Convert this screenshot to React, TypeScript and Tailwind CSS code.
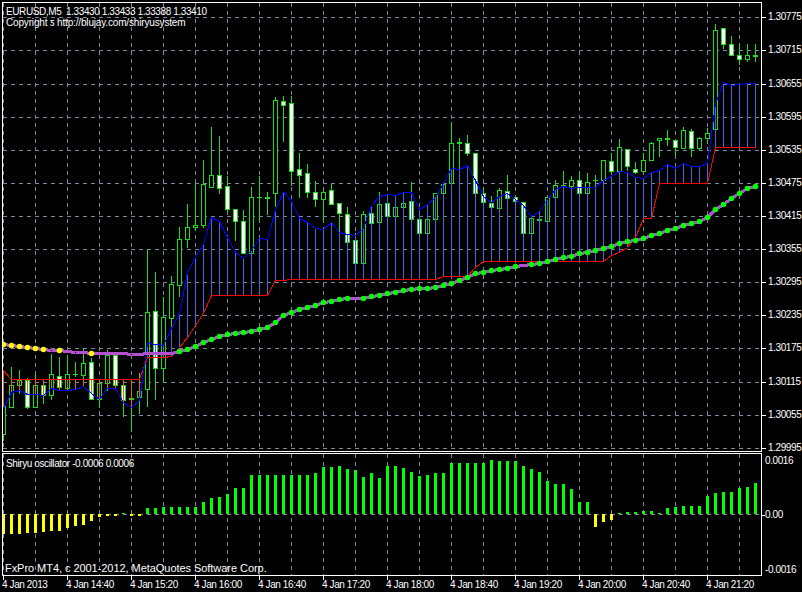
import React from 'react';

// bar i sits at pixel column 3 + 8 * i, everything below is in page pixels
const barX = (i: number) => 3 + 8 * i;

// high, body top, body bottom, low, white body?
const CANDLES: number[][] = [
  [405, 405, 434, 440, 0], [367, 385, 407, 407, 0], [370, 380, 385, 393, 0], [378, 380, 407, 408, 1], [374, 385, 407, 407, 0],
  [385, 385, 395, 403, 1], [354, 374, 395, 399, 0], [357, 376, 387, 387, 1], [356, 374, 388, 388, 0], [362, 374, 374, 376, 0],
  [348, 363, 375, 382, 0], [358, 362, 399, 399, 1], [382, 383, 399, 407, 0], [350, 355, 383, 390, 0], [355, 355, 385, 385, 1],
  [383, 385, 400, 416, 1], [380, 398, 399, 431, 0], [373, 391, 397, 413, 0], [249, 312, 389, 406, 0], [272, 311, 368, 399, 1],
  [297, 317, 368, 382, 0], [276, 284, 318, 330, 0], [227, 239, 285, 296, 0], [204, 227, 239, 247, 0], [183, 225, 227, 230, 0],
  [160, 184, 225, 227, 0], [127, 175, 187, 187, 0], [136, 175, 188, 193, 1], [176, 186, 209, 211, 1], [209, 209, 221, 240, 1],
  [210, 221, 253, 253, 1], [187, 197, 253, 253, 0], [176, 197, 197, 221, 0], [192, 197, 198, 214, 0], [97, 100, 193, 206, 0],
  [96, 101, 105, 141, 1], [96, 103, 171, 185, 1], [153, 169, 175, 197, 1], [164, 173, 192, 197, 1], [181, 192, 199, 206, 1],
  [188, 192, 199, 221, 0], [184, 190, 204, 204, 1], [203, 203, 213, 233, 1], [207, 214, 242, 242, 1], [233, 240, 263, 263, 1],
  [211, 214, 263, 263, 0], [208, 213, 223, 223, 1], [192, 204, 222, 222, 0], [203, 203, 216, 216, 1], [207, 207, 216, 216, 0],
  [203, 203, 207, 207, 0], [182, 201, 219, 219, 1], [219, 219, 233, 233, 1], [219, 219, 233, 233, 0], [193, 193, 219, 219, 0],
  [182, 184, 193, 193, 0], [122, 143, 183, 183, 0], [138, 142, 143, 170, 0], [135, 143, 153, 155, 1], [153, 153, 193, 193, 1],
  [187, 193, 202, 202, 1], [196, 203, 207, 207, 1], [188, 190, 208, 208, 0], [175, 191, 198, 198, 1], [197, 197, 201, 201, 1],
  [202, 202, 233, 233, 1], [218, 218, 233, 233, 0], [219, 219, 220, 220, 0], [197, 197, 221, 221, 0], [180, 185, 197, 197, 0],
  [171, 185, 185, 187, 0], [176, 180, 186, 190, 0], [172, 180, 193, 193, 1], [173, 182, 193, 193, 0], [175, 180, 180, 187, 0],
  [160, 160, 180, 180, 0], [153, 161, 171, 173, 1], [139, 147, 171, 171, 0], [149, 149, 166, 170, 1], [162, 169, 172, 173, 1],
  [153, 160, 171, 171, 0], [142, 143, 160, 160, 0], [138, 138, 140, 156, 0], [130, 138, 139, 145, 0], [140, 140, 147, 155, 1],
  [127, 130, 148, 148, 0], [129, 131, 148, 156, 1], [137, 138, 148, 149, 0], [128, 133, 138, 143, 0], [24, 30, 129, 129, 0],
  [28, 28, 44, 48, 1], [36, 44, 55, 55, 1], [44, 55, 59, 64, 1], [44, 55, 59, 61, 0], [44, 55, 56, 61, 0],
];

const BLUE = [
  408, 392, 390, 394, 394, 395, 388, 390, 390, 389,
  386, 393, 399, 388, 388, 402, 407, 400, 343, 344,
  345, 328, 313, 272, 257, 244, 217, 221, 237, 252,
  258, 250, 238, 239, 210, 191, 201, 218, 222, 228,
  229, 222, 232, 234, 235, 228, 205, 196, 194, 195,
  192, 192, 209, 204, 197, 183, 168, 169, 165, 180,
  196, 202, 196, 193, 199, 205, 216, 211, 199, 189,
  186, 188, 187, 187, 187, 180, 176, 171, 172, 177,
  178, 172, 170, 164, 168, 163, 166, 166, 163, 103,
  82, 85, 84, 83, 83,
];

const RED = [
  370, 379, 379, 379, 379, 379, 379, 379, 379, 379,
  379, 379, 379, 379, 379, 379, 379, 379, 357, 357,
  357, 356, 347, 337, 325, 313, 295, 295, 295, 295,
  295, 295, 295, 295, 280, 280, 279, 279, 279, 279,
  279, 279, 279, 279, 279, 279, 279, 279, 279, 279,
  279, 279, 279, 279, 279, 276, 276, 276, 276, 267,
  261, 261, 261, 261, 261, 261, 261, 261, 261, 261,
  261, 261, 261, 261, 261, 261, 255, 252, 247, 237,
  218, 218, 183, 183, 183, 183, 183, 183, 183, 147,
  147, 147, 147, 147, 147,
];

const MA = [
  344, 345, 346, 347, 348, 349, 350, 350, 351, 352,
  352, 353, 353, 353, 353, 353, 354, 354, 353, 353,
  353, 353, 351, 349, 346, 342, 339, 336, 334, 333,
  332, 331, 329, 327, 322, 315, 312, 309, 307, 305,
  302, 301, 299, 298, 298, 298, 296, 295, 293, 292,
  290, 289, 288, 288, 287, 285, 283, 280, 277, 273,
  272, 270, 269, 268, 266, 265, 264, 263, 261, 259,
  257, 256, 253, 252, 250, 248, 246, 243, 241, 240,
  238, 235, 233, 230, 228, 225, 223, 221, 217, 209,
  204, 198, 193, 188, 186,
];

const YELLOW_DOTS = [0, 1, 2, 3, 4, 5, 7, 11];
const GREEN_DOTS = MA.map((_, i) => i).filter((i) => i >= 22 && i !== 44 && i !== 65);

// oscillator, pixels above (+) or below (-) the zero line
const OSC = [
  -20, -20, -20, -19, -19, -18, -17, -17, -14, -12,
  -11, -7, -3, -2, -2, 1, -2, -2, 6, 6,
  7, 7, 7, 7, 7, 12, 16, 17, 20, 26,
  26, 39, 39, 39, 39, 39, 39, 39, 39, 41,
  47, 47, 48, 45, 44, 37, 41, 36, 48, 48,
  46, 42, 38, 39, 41, 41, 51, 51, 51, 51,
  51, 54, 53, 53, 53, 48, 45, 42, 33, 30,
  30, 25, 12, 12, -13, -8, -6, 1, 2, 2,
  3, 3, 1, 6, 7, 8, 8, 8, 18, 21,
  22, 22, 26, 27, 31,
];

const GRID_X = Array.from({ length: 24 }, (_, i) => 3 + 32 * i);
const GRID_Y = [17, 50, 84, 117, 150, 183, 216, 249, 282, 315, 348, 382, 415, 448];
const PRICES = ['1.30775', '1.30715', '1.30655', '1.30595', '1.30535', '1.30475', '1.30415', '1.30355', '1.30295', '1.30235', '1.30175', '1.30115', '1.30055', '1.29995'];
const TIMES = ['4 Jan 2013', '4 Jan 14:40', '4 Jan 15:20', '4 Jan 16:00', '4 Jan 16:40', '4 Jan 17:20', '4 Jan 18:00', '4 Jan 18:40', '4 Jan 19:20', '4 Jan 20:00', '4 Jan 20:40', '4 Jan 21:20'];
const ZERO_Y = 514;

const points = (ys: number[]) => ys.map((y, i) => `${barX(i) + 0.5},${y + 0.5}`).join(' ');

function VerticalGrid({ y1, y2 }: { y1: number; y2: number }) {
  return (
    <>
      {GRID_X.map((x) => (
        <line key={x} x1={x + 0.5} x2={x + 0.5} y1={y1} y2={y2} className="stroke-[#778899]" strokeDasharray="4 4" />
      ))}
    </>
  );
}

function PriceChart() {
  return (
    <svg viewBox="3 3 758 448" width={758} height={448} className="block" shapeRendering="crispEdges">
      <VerticalGrid y1={3} y2={451} />
      {GRID_Y.map((y) => (
        <line key={y} x1={3} x2={761} y1={y + 0.5} y2={y + 0.5} className="stroke-[#778899]" strokeDasharray="4 4" />
      ))}

      {CANDLES.map(([high, top, bottom, low, white], i) => {
        const x = barX(i);
        const h = bottom - top + 1;
        return (
          <g key={i}>
            <rect x={x} y={high} width={1} height={low - high + 1} className="fill-[#1fdc1f]" />
            <rect x={x - 2} y={top} width={5} height={h} className="fill-[#1fdc1f]" />
            {h > 2 && <rect x={x - 1} y={top + 1} width={3} height={h - 2} className={white ? 'fill-white' : 'fill-black'} />}
          </g>
        );
      })}

      {BLUE.map((y, i) => (
        <rect
          key={i}
          x={barX(i)}
          y={Math.min(y, RED[i])}
          width={1}
          height={Math.abs(y - RED[i])}
          className={y < RED[i] ? 'fill-[#4169e1]' : 'fill-[#e8601c]'}
        />
      ))}

      <polyline points={points(RED)} fill="none" strokeWidth={1} className="stroke-[#ff0000]" />
      <polyline points={points(BLUE)} fill="none" strokeWidth={1} className="stroke-[#0000ff]" />
      <polyline points={points(MA)} fill="none" strokeWidth={3} className="stroke-[#b44fcf]" />

      {YELLOW_DOTS.map((i) => (
        <circle key={i} cx={barX(i) + 0.5} cy={MA[i] + 0.5} r={2.8} shapeRendering="auto" className="fill-[#ffff00]" />
      ))}
      {GREEN_DOTS.map((i) => (
        <circle key={i} cx={barX(i) + 0.5} cy={MA[i] + 0.5} r={2.8} shapeRendering="auto" className="fill-[#00ff00]" />
      ))}
    </svg>
  );
}

function Oscillator() {
  return (
    <svg viewBox="3 454 758 121" width={758} height={121} className="block" shapeRendering="crispEdges">
      <VerticalGrid y1={454} y2={575} />
      <line x1={3} x2={761} y1={ZERO_Y + 0.5} y2={ZERO_Y + 0.5} className="stroke-[#778899]" strokeDasharray="4 4" />
      {OSC.map((v, i) => (
        <rect
          key={i}
          x={barX(i) - 1}
          y={v > 0 ? ZERO_Y - v : ZERO_Y}
          width={3}
          height={Math.abs(v)}
          className={v > 0 ? 'fill-[#00ff00]' : 'fill-[#ffff00]'}
        />
      ))}
    </svg>
  );
}

export default function App() {
  return (
    <div className="flex h-[592px] w-[802px] flex-col overflow-hidden bg-black pl-[2px] pt-[2px] font-['Liberation_Sans',sans-serif] text-[10px] leading-none tracking-[-0.4px] text-white">
      <div className="flex">
        <div className="w-[760px]">
          <div className="relative h-[450px] border border-white">
            <PriceChart />
            <div className="absolute left-[3px] top-[4px] whitespace-pre">
              <div className="h-[10px] leading-[10px]">EURUSD,M5  1.33430 1.33433 1.33388 1.33410</div>
              <div className="mt-[1px] h-[10px] leading-[10px] tracking-[-0.16px]">Copyright ƽ http://blujay.com/shiryusystem</div>
            </div>
          </div>
          <div className="relative mt-[1px] h-[123px] border border-white">
            <Oscillator />
            <div className="absolute left-[3px] top-[5px]">Shiryu oscillator -0.0006 0.0006</div>
            <div className="absolute bottom-[1px] left-[2px] text-[11px] tracking-[-0.05px]">FxPro MT4, c 2001-2012, MetaQuotes Software Corp.</div>
          </div>
        </div>

        <div className="flex-1">
          <div className="h-[451px] pt-[15px]">
            {PRICES.map((price, i) => (
              <div key={price} className="flex items-start" style={{ height: (GRID_Y[i + 1] ?? 451) - GRID_Y[i] }}>
                <span className="h-px w-[4px] bg-white" />
                <span className="ml-[2px] -mt-[5px]">{price}</span>
              </div>
            ))}
          </div>
          <div className="pt-[3px]">
            <div className="h-[54px] pl-[3px]">0.0016</div>
            <div className="flex h-[55px] items-start">
              <span className="mt-[5px] h-px w-[3px] bg-white" />
              <span>0.00</span>
            </div>
            <div className="pl-[3px]">-0.0016</div>
          </div>
        </div>
      </div>

      <div className="flex">
        {TIMES.map((t) => (
          <div key={t} className="w-[64px] shrink-0">
            <div className="ml-[1px] h-[4px] w-px bg-white" />
            <div className="whitespace-nowrap">{t}</div>
          </div>
        ))}
      </div>
    </div>
  );
}
